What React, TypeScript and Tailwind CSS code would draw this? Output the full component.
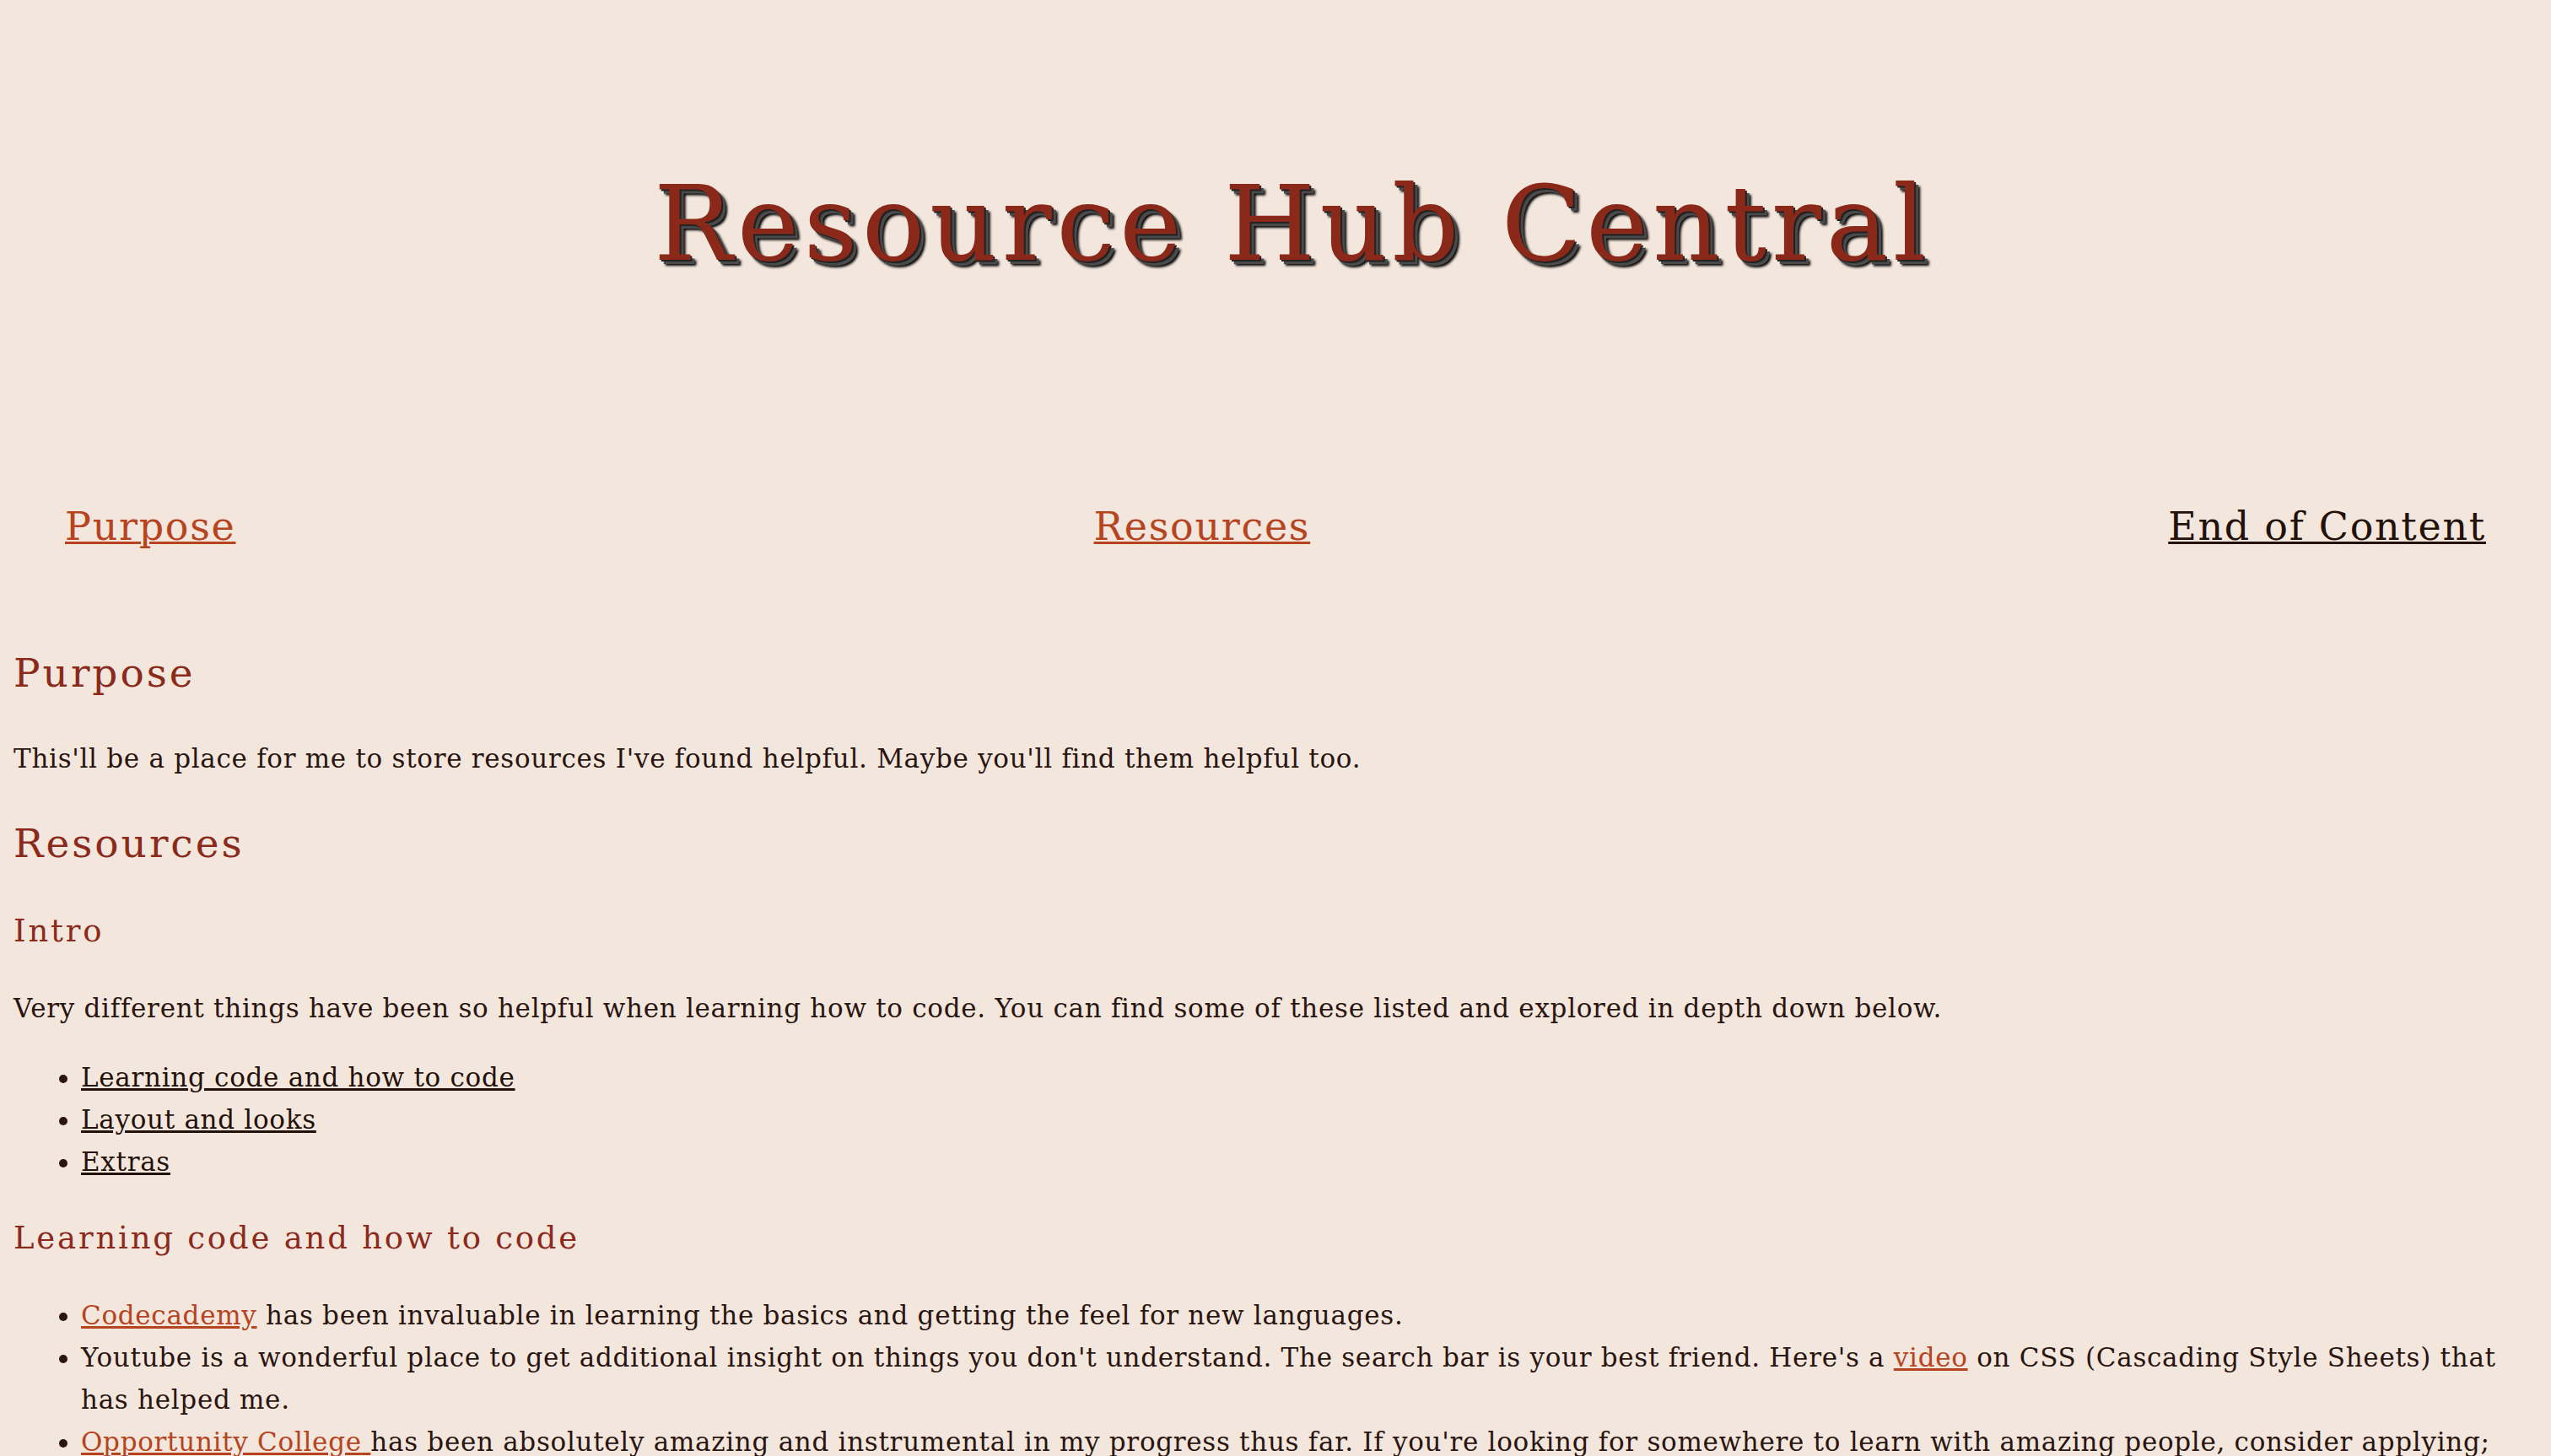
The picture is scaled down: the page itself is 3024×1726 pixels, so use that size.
import React from 'react';

const linkOrange = 'text-[#b5441f] underline';
const linkDark = 'text-[#24110a] underline';
const h2Class = 'text-[47px] leading-[72px] tracking-[3px] font-normal text-[#8b2a1b]';
const h3Class = 'my-[38px] text-[37px] leading-[56px] tracking-[2.8px] font-normal text-[#8b2a1b]';

const App: React.FC = () => {
  return (
    <div className="min-h-screen bg-[#f3e6dd] px-4 pb-16 font-['DejaVu_Serif',serif] text-[31px] leading-[50px] tracking-[0.7px] text-[#2a1510]">
      {/* Header */}
      <header className="pt-[203px]">
        <h1 className="pl-[40px] text-center text-[124px] leading-none tracking-[5.5px] font-normal text-[#8a2819] [text-shadow:2px_2px_0_#222,5px_5px_0_#4a4a4a,7px_7px_3px_#000]">
          Resource Hub Central
        </h1>
      </header>

      {/* Nav */}
      <nav className="mt-[274px] flex justify-between px-[61px] text-[46px] leading-none tracking-[1.7px]">
        <a href="#purpose" className={`${linkOrange} decoration-[3px]`}>
          Purpose
        </a>
        <a href="#resources" className={`${linkOrange} decoration-[3px]`}>
          Resources
        </a>
        <a href="#end" className={`${linkDark} decoration-[3px]`}>
          End of Content
        </a>
      </nav>

      <main className="pt-[75px]">
        <h2 id="purpose" className={`my-[40px] ${h2Class}`}>
          Purpose
        </h2>
        <p className="my-[32px]">
          This'll be a place for me to store resources I've found helpful. Maybe you'll find them helpful too.
        </p>

        <h2 id="resources" className={`my-[40px] ${h2Class}`}>
          Resources
        </h2>
        <h3 className={h3Class}>Intro</h3>
        <p className="my-[32px]">
          Very different things have been so helpful when learning how to code. You can find some of these listed and
          explored in depth down below.
        </p>
        <ul className="my-[32px] list-disc pl-[80px]">
          <li>
            <a href="#learning" className={linkDark}>
              Learning code and how to code
            </a>
          </li>
          <li>
            <a href="#layout" className={linkDark}>
              Layout and looks
            </a>
          </li>
          <li>
            <a href="#extras" className={linkDark}>
              Extras
            </a>
          </li>
        </ul>

        <h3 id="learning" className={h3Class}>
          Learning code and how to code
        </h3>
        <ul className="my-[32px] list-disc pl-[80px]">
          <li>
            <a href="#codecademy" className={linkOrange}>
              Codecademy
            </a>{' '}
            has been invaluable in learning the basics and getting the feel for new languages.
          </li>
          <li>
            Youtube is a wonderful place to get additional insight on things you don't understand. The search bar is
            your best friend. Here's a{' '}
            <a href="#video" className={linkOrange}>
              video
            </a>{' '}
            on CSS (Cascading Style Sheets) that has helped me.
          </li>
          <li>
            <a href="#opportunity" className={linkOrange}>
              Opportunity College{' '}
            </a>
            has been absolutely amazing and instrumental in my progress thus far. If you're looking for somewhere to
            learn with amazing people, consider applying; it's been worth it.
          </li>
        </ul>

        <h3 id="layout" className={h3Class}>
          Layout and looks
        </h3>
        <h3 id="extras" className={h3Class}>
          Extras
        </h3>
        <p id="end" className="my-[32px]">
          End of content.
        </p>
      </main>
    </div>
  );
};

export default App;
